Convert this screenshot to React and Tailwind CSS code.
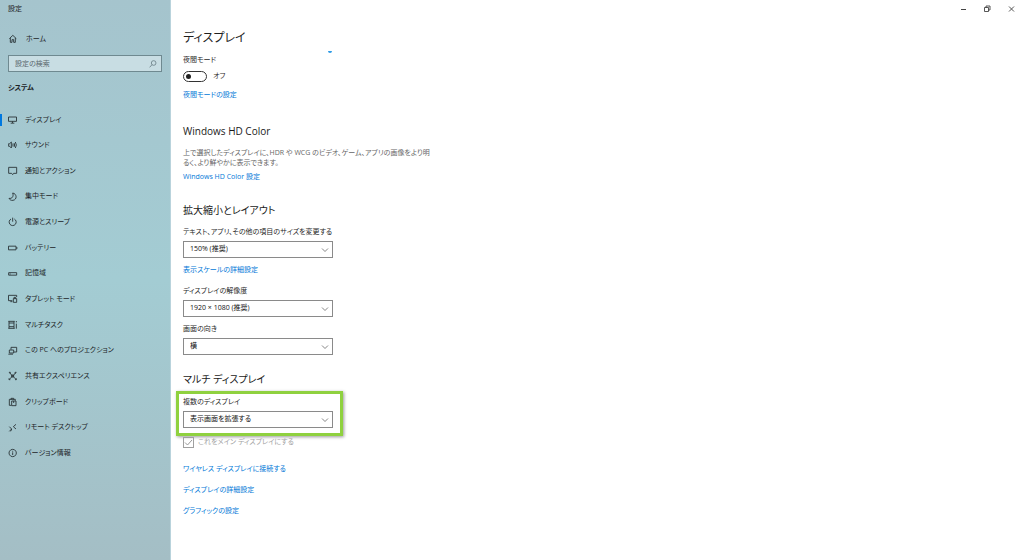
import React from "react";

const iconPaths = {
  home: <path d="M4 14 L14.500 4 L25 14 M7 12 V25 H12 V17 H17 V25 H22 V12" />,
  display: <path d="M1.500 6 H25.500 V19 H1.500 Z M13.500 19 V24 M8 24.500 H19" />,
  sound: (
    <path d="M2 11 H5 L10 6 V24 L5 19 H2 Z M14 11 Q17 15 14 19 M18 9 Q22 15 18 21 M22 6 Q28 15 22 24" />
  ),
  notification: <path d="M2 4 H26 V22 H17 L14 26 L11 22 H2 Z" />,
  moon: <path d="M14 3 C27 5 28 23 15 25 C9 26 5 23 3 19 C12 21 18 13 14 3 Z" />,
  power: <path d="M14 2 V14 M9 6 A10.500 10.500 0 1 0 19 6" />,
  battery: <path d="M1.500 9.500 H24 V20.500 H1.500 Z M26.500 12 V18" />,
  storage: <path d="M2 11 H26 V18.500 H2 Z M5 15 H8" />,
  tablet: (
    <path d="M13 20 H1.500 V4 H26 V9 M7 23 H13 M16 14 H26 V25 H16 Z M18 14 V10 H23 V14" />
  ),
  multitask: (
    <path d="M3 9 H18 V20 H3 Z M1 4 H20 M1 25 H20 M3 4 V9 M18 4 V9 M3 20 V25 M18 20 V25 M25 3 V7 M25 11 V26" />
  ),
  project: <path d="M9 11 V4 H26 V18 H18 M4 12 H17 V21 H4 Z M1 24.500 H15" />,
  share: (
    <path d="M4 5 L24 25 M24 5 L4 25 M3 4 H7 V8 M21 8 V4 H25 M3 22 V26 H7 M21 26 H25 V22 M11 12 H17 V18 H11 Z" />
  ),
  clipboard: (
    <path d="M10 25 H4 V7 H22 V11 M9 8 V4 H17 V8 M11 12 H24 V26 H11 Z M17 12 V18" />
  ),
  remote: <path d="M4 11 L11 18 L4 25 M24 4 L16 11 L24 18 M11 18 L8 25" />,
  info: (
    <path d="M14 4 A11 11 0 1 0 14.100 4 Z M14 13 V21 M14 8.500 V11" />
  ),
};

function Icon({ name }) {
  return (
    <svg
      viewBox="0 0 30 30"
      className="size-2.5 shrink-0 fill-none stroke-[#2a3438] stroke-[2.7]"
      aria-hidden="true"
    >
      {iconPaths[name]}
    </svg>
  );
}

const navItems = [
  ["display", "ディスプレイ"],
  ["sound", "サウンド"],
  ["notification", "通知とアクション"],
  ["moon", "集中モード"],
  ["power", "電源とスリープ"],
  ["battery", "バッテリー"],
  ["storage", "記憶域"],
  ["tablet", "タブレット モード"],
  ["multitask", "マルチタスク"],
  ["project", "この PC へのプロジェクション"],
  ["share", "共有エクスペリエンス"],
  ["clipboard", "クリップボード"],
  ["remote", "リモート デスクトップ"],
  ["info", "バージョン情報"],
];

function Sidebar() {
  return (
    <aside className="flex w-[171px] shrink-0 flex-col border-r border-[#b9d3dc] bg-linear-to-b from-[#a5c4cd] via-[#a3ccd3] to-[#a4bec5] text-[#1c2427]">
      <div className="mt-[3px] pl-2 leading-3">設定</div>
      <a href="#home" className="mt-[18px] flex items-center gap-2 pl-2 leading-3">
        <Icon name="home" />
        ホーム
      </a>
      <div className="mr-2 ml-2 mt-2.5 flex h-[17px] items-center border border-[#6f8990] bg-[#c8dde3] pr-1 pl-1.5">
        <input
          type="search"
          aria-label="設定の検索"
          placeholder="設定の検索"
          className="min-w-0 flex-1 bg-transparent leading-3 outline-none placeholder:text-[#59676c]"
        />
        <svg viewBox="0 0 24 24" className="size-2 fill-none stroke-[#6c8188] stroke-[2.5]" aria-hidden="true">
          <circle cx="14" cy="9" r="7" />
          <path d="M9 14 L2 22" />
        </svg>
      </div>
      <h2 className="mt-2.5 pl-2 leading-3 font-bold">システム</h2>
      <nav className="mt-[13px] grid h-[359px] auto-rows-fr">
        {navItems.map(([icon, label], i) => (
          <a
            key={icon}
            href={"#" + icon}
            aria-current={i === 0 ? "page" : undefined}
            className="group flex items-center"
          >
            <span className="h-3 w-0.5 group-aria-[current=page]:bg-[#0078e0]" />
            <span className="ml-1.5 flex items-center gap-[7px]">
              <Icon name={icon} />
              {label}
            </span>
          </a>
        ))}
      </nav>
    </aside>
  );
}

function WindowControls() {
  return (
    <header className="flex h-4 justify-end pr-px">
      <button aria-label="最小化" className="flex w-6 items-center justify-center">
        <svg viewBox="0 0 7 7" className="size-[7px] fill-none stroke-[#444]">
          <path d="M1 4.500 H6" />
        </svg>
      </button>
      <button aria-label="元に戻す" className="flex w-6 items-center justify-center">
        <svg viewBox="0 0 7 7" className="size-[7px] fill-none stroke-[#444] stroke-[0.9]">
          <path d="M0.500 2.500 H4.500 V6.500 H0.500 Z M2 2.500 V1 H6 V5 H4.500" />
        </svg>
      </button>
      <button aria-label="閉じる" className="flex w-6 items-center justify-center">
        <svg viewBox="0 0 7 7" className="size-[7px] fill-none stroke-[#444] stroke-[0.9]">
          <path d="M1 1.500 L6 6.500 M6 1.500 L1 6.500" />
        </svg>
      </button>
    </header>
  );
}

function SelectField({ id, label, value }) {
  return (
    <div>
      <label htmlFor={id} className="block leading-3">
        {label}
      </label>
      <div className="mt-[3px] grid w-[150px] items-center">
        <select
          id={id}
          defaultValue={value}
          className="col-start-1 row-start-1 h-[17px] appearance-none border border-[#8a8a8a] bg-white px-1.5 text-[#111]"
        >
          <option>{value}</option>
        </select>
        <svg
          viewBox="0 0 8 6"
          className="pointer-events-none col-start-1 row-start-1 mr-1 h-1.5 w-2 justify-self-end fill-none stroke-[#666] stroke-[0.8]"
          aria-hidden="true"
        >
          <path d="M1 1.500 L4 4.500 L7 1.500" />
        </svg>
      </div>
    </div>
  );
}

function TextLink({ href, children }) {
  return (
    <a href={href} className="block w-fit leading-3 text-[#0078d7]">
      {children}
    </a>
  );
}

function SectionTitle({ children }) {
  return <h2 className="text-[10px] leading-4 text-[#1a1a1a]">{children}</h2>;
}

export default function App() {
  return (
    <div className="flex min-h-screen bg-white font-['Open_Sans','Noto_Sans_CJK_JP',sans-serif] text-[7px] text-[#1f1f1f] [font-feature-settings:'palt']">
      <Sidebar />
      <div className="flex-1">
        <WindowControls />
        <main className="pl-3">
          <div className="relative mt-3">
            <h1 className="text-[12px] leading-5">ディスプレイ</h1>
            <span className="absolute top-[23px] left-[145px] h-0.5 w-1 rounded-b-full bg-[#2e9be6]" />
          </div>

          <div className="mt-1.5 leading-3" id="night-label">夜間モード</div>
          <label className="mt-1 flex h-3 items-center gap-1.5">
            <input type="checkbox" role="switch" aria-labelledby="night-label" className="peer sr-only" />
            <span className="flex h-[11px] w-6 items-center rounded-full border border-[#333] px-0.5 peer-checked:justify-end">
              <span className="size-[5px] rounded-full bg-[#222]" />
            </span>
            オフ
          </label>
          <div className="mt-[7px]">
            <TextLink href="#night">夜間モードの設定</TextLink>
          </div>

          <section className="mt-[22px]">
            <SectionTitle>Windows HD Color</SectionTitle>
            <p className="mt-[9px] mb-[3px] leading-[10px] text-[#666]">
              上で選択したディスプレイに、HDR や WCG のビデオ、ゲーム、アプリの画像をより明
              <br />
              るく、より鮮やかに表示できます。
            </p>
            <TextLink href="#hd-color">Windows HD Color 設定</TextLink>
          </section>

          <section className="mt-[19px]">
            <SectionTitle>拡大縮小とレイアウト</SectionTitle>
            <div className="mt-2">
              <SelectField id="scale" label="テキスト、アプリ、その他の項目のサイズを変更する" value="150% (推奨)" />
            </div>
            <div className="mt-1.5 mb-[9px]">
              <TextLink href="#scaling">表示スケールの詳細設定</TextLink>
            </div>
            <div className="grid gap-1.5">
              <SelectField id="resolution" label="ディスプレイの解像度" value="1920 × 1080 (推奨)" />
              <SelectField id="orientation" label="画面の向き" value="横" />
            </div>
          </section>

          <section className="mt-4">
            <SectionTitle>マルチ ディスプレイ</SectionTitle>
            <div className="mt-1 -ml-[7px] w-[167px] border-3 border-[#8fd13f] px-1 pt-0.5 pb-[5px] shadow-[1px_1px_3px_rgba(0,0,0,0.4)]">
              <SelectField id="multi" label="複数のディスプレイ" value="表示画面を拡張する" />
            </div>
            <label className="flex h-3 items-center gap-1 text-[#a3a3a3]">
              <span className="grid size-[11px]">
                <input
                  type="checkbox"
                  defaultChecked
                  disabled
                  className="col-start-1 row-start-1 size-[11px] appearance-none border border-[#a0a0a0]"
                />
                <svg viewBox="0 0 11 11" className="col-start-1 row-start-1 size-[11px] fill-none stroke-[#999]" aria-hidden="true">
                  <path d="M2 5.500 L4.500 8 L9 3" />
                </svg>
              </span>
              これをメイン ディスプレイにする
            </label>
            <div className="mt-[15px] grid gap-[9px]">
              <TextLink href="#wireless">ワイヤレス ディスプレイに接続する</TextLink>
              <TextLink href="#advanced">ディスプレイの詳細設定</TextLink>
              <TextLink href="#graphics">グラフィックの設定</TextLink>
            </div>
          </section>
        </main>
      </div>
    </div>
  );
}
